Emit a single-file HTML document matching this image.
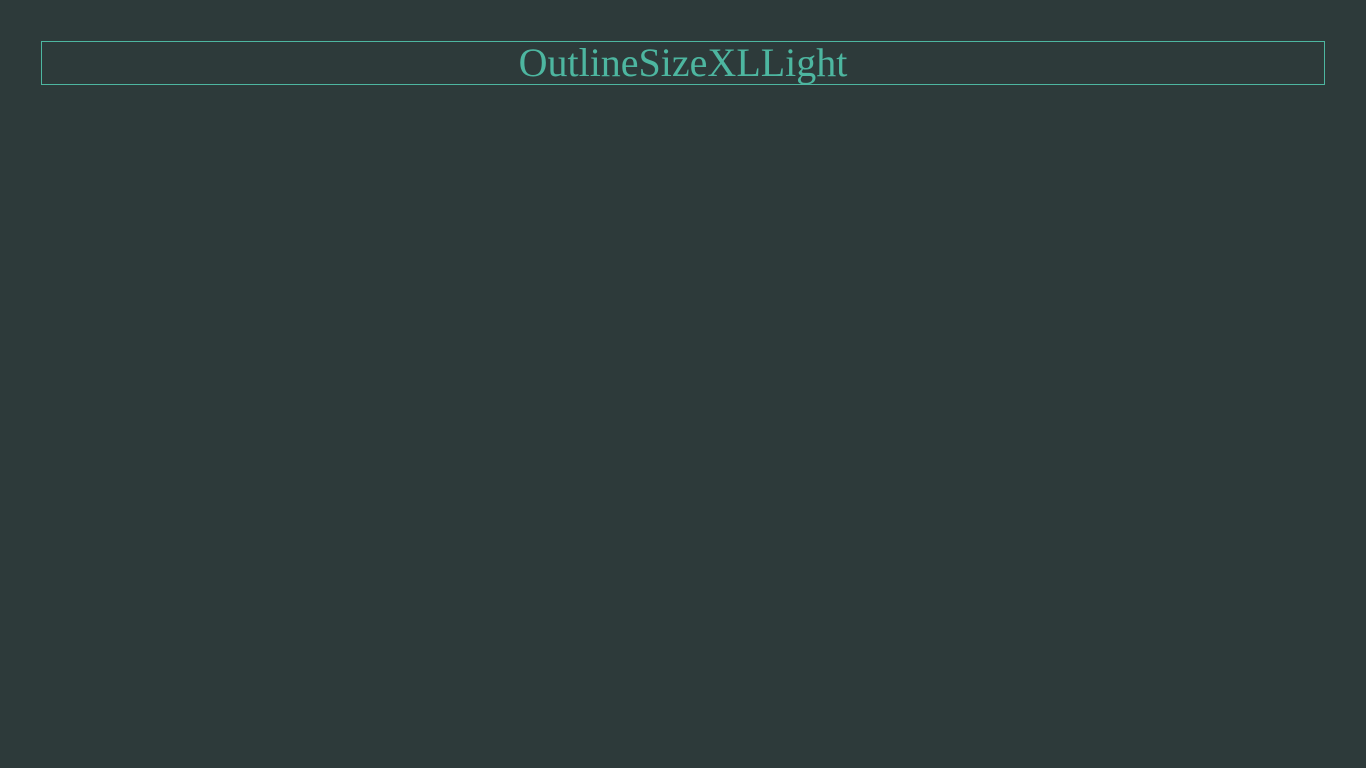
<!DOCTYPE html>
<html><head><meta charset="utf-8"><style>
html,body{margin:0;padding:0;background:#2d3a3a;width:1366px;height:768px;overflow:hidden}
.box{position:absolute;left:41px;top:41px;width:1282px;height:42px;border:1px solid #4db6a0;
color:#4db6a0;font-family:"Liberation Serif",serif;font-size:40px;line-height:42px;text-align:center}
</style></head><body>
<div class="box">OutlineSizeXLLight</div>
</body></html>
